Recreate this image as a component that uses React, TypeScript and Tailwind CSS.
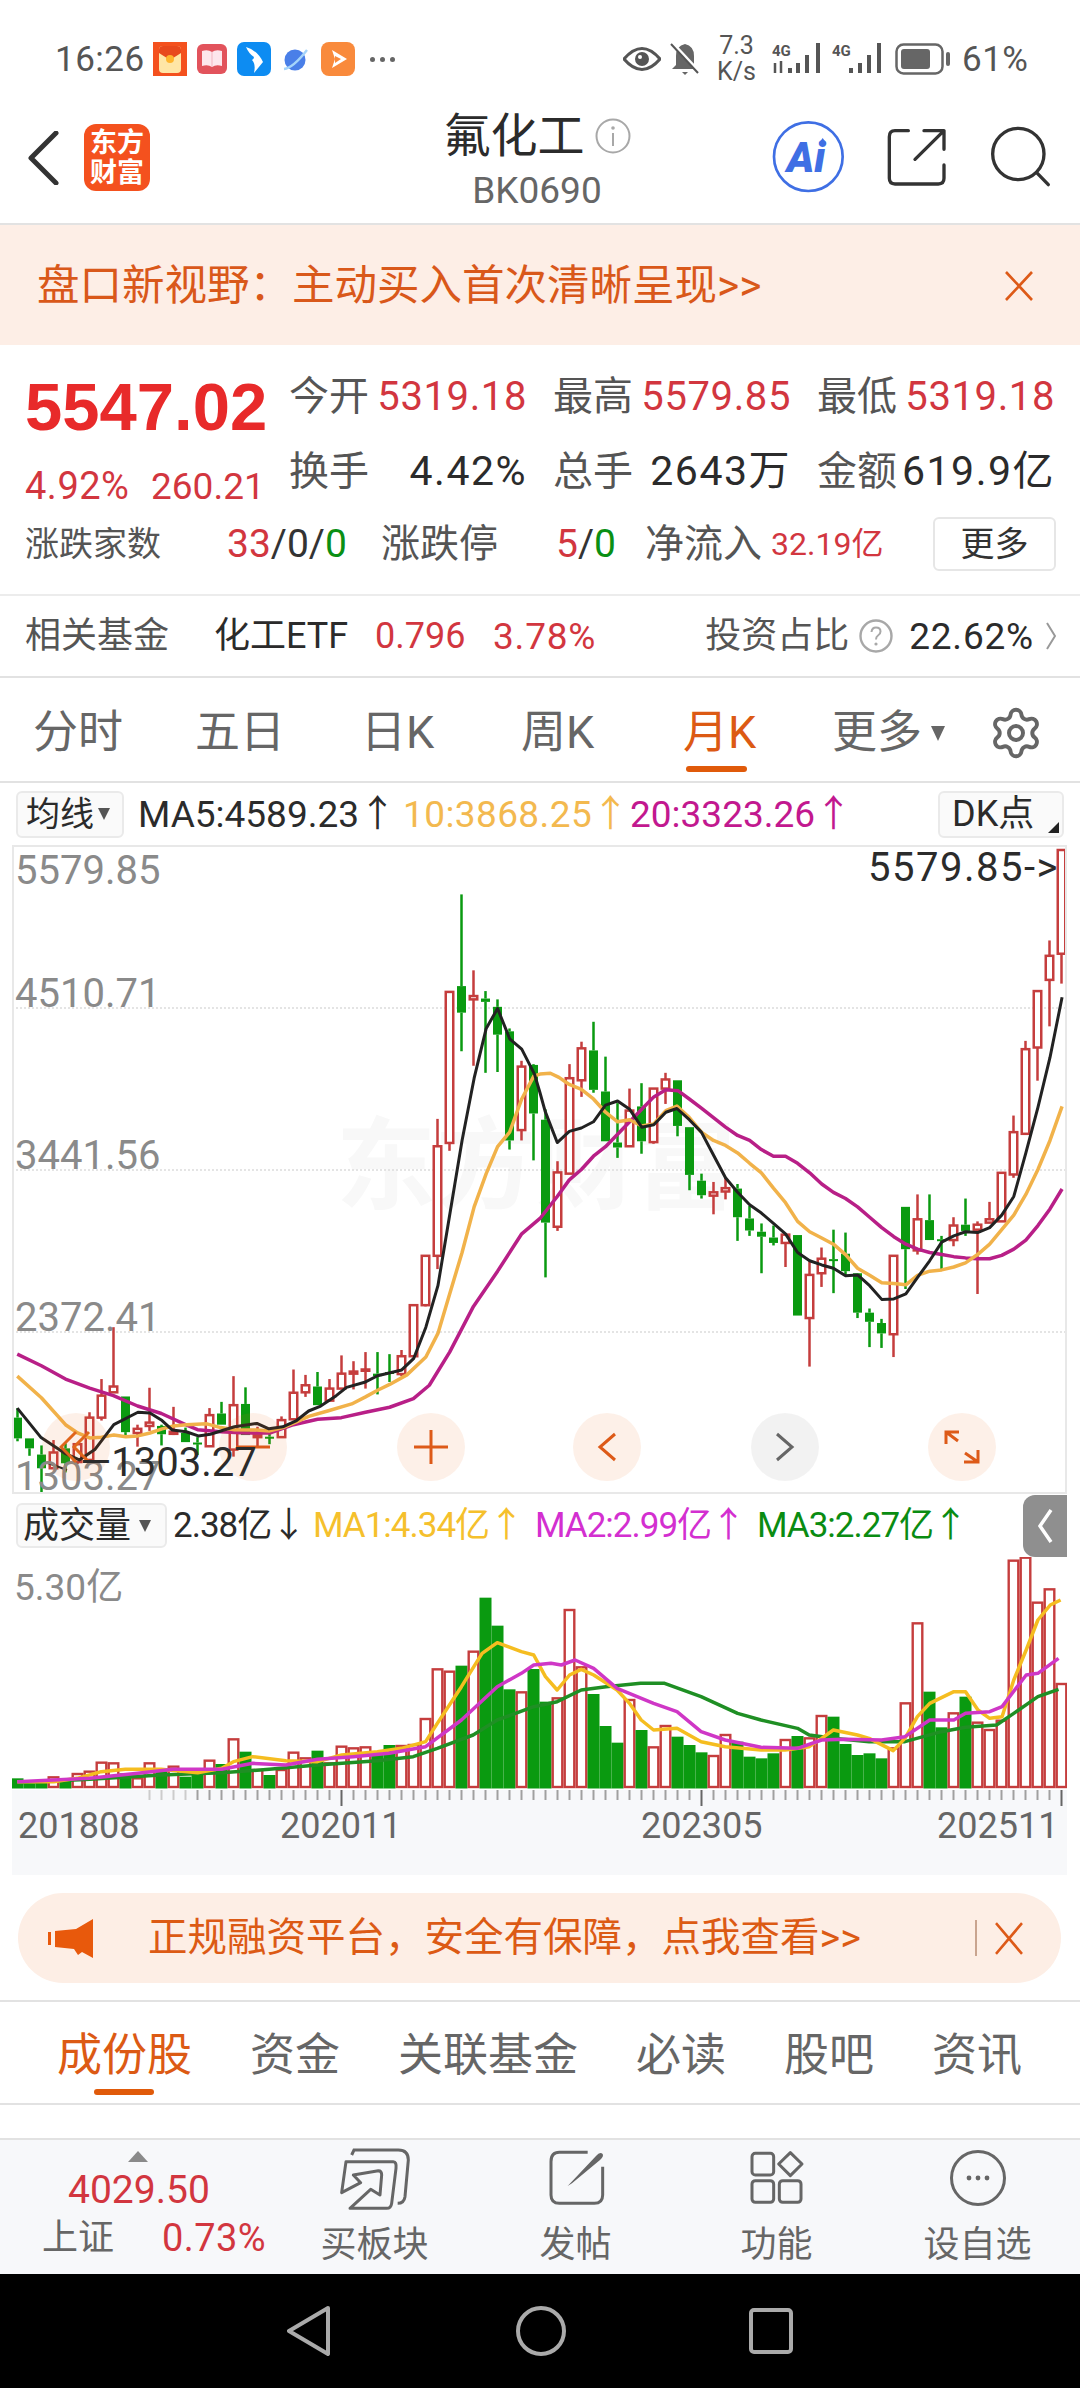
import React from 'react';
import { Settings } from 'lucide-react';

const RED = '#c53d3d';
const GREEN = '#0a9a10';

// candles read off the chart: [wick top, body top, body bottom, wick bottom, colour]
type Candle = [number, number, number, number, 'r' | 'g'];
const candles: Candle[] = [
  [1345, 1368, 1418, 1425, 'g'], [1418, 1418, 1442, 1460, 'g'], [1435, 1457, 1490, 1552, 'g'], [1422, 1452, 1490, 1490, 'r'],
  [1430, 1442, 1478, 1500, 'g'], [1432, 1432, 1475, 1480, 'r'], [1355, 1368, 1470, 1475, 'r'], [1275, 1315, 1368, 1375, 'r'],
  [1150, 1293, 1307, 1307, 'r'], [1317, 1317, 1403, 1410, 'g'], [1385, 1395, 1405, 1438, 'r'], [1296, 1380, 1388, 1400, 'r'],
  [1385, 1388, 1408, 1435, 'g'], [1342, 1402, 1407, 1410, 'r'], [1392, 1405, 1427, 1427, 'g'], [1415, 1428, 1432, 1458, 'g'],
  [1345, 1362, 1437, 1437, 'r'], [1330, 1358, 1385, 1385, 'g'], [1268, 1338, 1445, 1462, 'r'], [1295, 1335, 1410, 1410, 'g'],
  [1390, 1410, 1415, 1440, 'r'], [1405, 1414, 1417, 1432, 'g'], [1365, 1374, 1415, 1415, 'r'], [1252, 1308, 1372, 1372, 'r'],
  [1265, 1290, 1307, 1318, 'r'], [1258, 1293, 1338, 1338, 'g'], [1275, 1298, 1327, 1327, 'r'], [1218, 1262, 1298, 1298, 'r'],
  [1232, 1257, 1262, 1300, 'r'], [1210, 1252, 1255, 1298, 'r'], [1210, 1262, 1268, 1312, 'g'], [1215, 1258, 1262, 1282, 'g'],
  [1205, 1220, 1263, 1268, 'r'], [1097, 1097, 1220, 1220, 'r'], [978, 978, 1097, 1100, 'r'], [648, 714, 978, 1010, 'r'],
  [342, 342, 706, 725, 'r'], [107, 328, 392, 485, 'g'], [290, 352, 360, 520, 'r'], [340, 358, 366, 537, 'g'],
  [360, 378, 445, 535, 'g'], [430, 437, 700, 722, 'g'], [508, 522, 675, 700, 'r'], [516, 518, 635, 748, 'g'],
  [625, 650, 898, 1030, 'g'], [750, 777, 908, 918, 'r'], [516, 550, 780, 780, 'r'], [462, 478, 555, 595, 'r'],
  [414, 483, 578, 585, 'g'], [498, 582, 702, 702, 'g'], [610, 705, 717, 742, 'g'], [575, 628, 714, 714, 'r'],
  [562, 618, 702, 732, 'g'], [575, 575, 704, 708, 'r'], [537, 553, 575, 612, 'r'], [555, 555, 665, 690, 'g'],
  [668, 668, 783, 820, 'g'], [780, 797, 832, 840, 'g'], [800, 825, 833, 878, 'r'], [790, 815, 823, 842, 'r'],
  [805, 816, 885, 942, 'g'], [858, 888, 917, 930, 'g'], [900, 920, 932, 1020, 'g'], [905, 934, 947, 953, 'g'],
  [927, 927, 947, 1005, 'r'], [928, 928, 1122, 1122, 'g'], [990, 1024, 1128, 1245, 'r'], [958, 985, 1020, 1053, 'r'],
  [915, 986, 989, 1068, 'g'], [922, 973, 1015, 1025, 'g'], [1020, 1020, 1115, 1128, 'g'], [1105, 1115, 1137, 1198, 'g'],
  [1130, 1140, 1165, 1200, 'g'], [978, 978, 1167, 1222, 'r'], [860, 860, 962, 1058, 'g'], [830, 890, 965, 975, 'r'],
  [830, 892, 940, 940, 'g'], [930, 938, 942, 1010, 'g'], [885, 905, 940, 955, 'r'], [840, 903, 918, 930, 'g'],
  [895, 903, 915, 1070, 'r'], [848, 890, 898, 898, 'r'], [778, 778, 895, 895, 'r'], [640, 680, 782, 790, 'r'],
  [460, 480, 684, 684, 'r'], [340, 340, 476, 556, 'r'], [218, 255, 313, 425, 'r'], [0, 0, 250, 322, 'r'],
];

const leftX = (z: number) => z / 2.9;
const rightX = (z: number) => 540 + z / 2.9;
const kY = (z: number) => 850 + z / 2.41;
const candleX = (i: number) => 17.5 + 12 * i;

const kLine = (left: number[][], right: number[][]) =>
  [...left.map(([x, y]) => `${leftX(x)},${kY(y)}`), ...right.map(([x, y]) => `${rightX(x)},${kY(y)}`)].join(' ');

const ma5 = kLine(
  [[50, 1345], [118, 1415], [190, 1455], [230, 1470], [275, 1445], [330, 1385], [400, 1355], [435, 1357], [470, 1375], [500, 1398], [540, 1402], [575, 1412], [610, 1408], [680, 1390], [745, 1382], [780, 1395], [820, 1390], [860, 1375], [895, 1352], [930, 1340], [975, 1315], [1005, 1295], [1060, 1282], [1095, 1267], [1165, 1253], [1200, 1225], [1235, 1150], [1270, 1050], [1300, 900], [1340, 700], [1375, 550], [1410, 430], [1443, 382], [1478, 455], [1513, 480], [1550, 540]],
  [[0, 585], [15, 630], [50, 705], [85, 678], [120, 670], [155, 655], [190, 615], [225, 605], [260, 625], [295, 668], [330, 662], [365, 632], [397, 623], [433, 650], [468, 680], [503, 735], [538, 790], [573, 825], [608, 855], [642, 875], [677, 900], [712, 925], [747, 970], [782, 990], [817, 1000], [851, 1008], [886, 1026], [921, 1024], [956, 1050], [991, 1083], [1026, 1082], [1061, 1070], [1095, 1030], [1130, 990], [1165, 945], [1200, 930], [1234, 920], [1269, 922], [1304, 910], [1339, 880], [1374, 835], [1409, 730], [1444, 620], [1479, 500], [1514, 355]],
);
const ma10 = kLine(
  [[50, 1268], [120, 1320], [190, 1385], [225, 1405], [260, 1417], [295, 1415], [330, 1410], [365, 1414], [400, 1412], [435, 1405], [470, 1395], [503, 1388], [540, 1385], [600, 1383], [640, 1392], [680, 1397], [745, 1398], [782, 1400], [820, 1392], [860, 1378], [895, 1365], [950, 1352], [1020, 1335], [1060, 1318], [1095, 1302], [1130, 1288], [1180, 1265], [1235, 1222], [1270, 1165], [1304, 1070], [1340, 970], [1375, 860], [1410, 780], [1443, 715], [1478, 680], [1513, 600], [1548, 545]],
  [[0, 540], [30, 538], [55, 548], [85, 565], [120, 577], [155, 600], [190, 632], [225, 655], [260, 650], [295, 665], [330, 660], [365, 628], [397, 617], [433, 645], [468, 680], [503, 700], [538, 712], [573, 730], [608, 755], [642, 778], [677, 815], [712, 850], [747, 895], [782, 920], [817, 935], [851, 950], [886, 975], [921, 1008], [956, 1025], [991, 1043], [1026, 1045], [1061, 1048], [1095, 1025], [1130, 1015], [1165, 1012], [1200, 1005], [1234, 995], [1269, 975], [1304, 950], [1339, 915], [1374, 880], [1409, 830], [1444, 770], [1479, 700], [1514, 618]],
);
const ma20 = kLine(
  [[50, 1215], [120, 1243], [190, 1275], [260, 1297], [329, 1315], [399, 1340], [468, 1358], [538, 1385], [573, 1397], [640, 1402], [712, 1405], [782, 1405], [851, 1385], [921, 1372], [990, 1368], [1060, 1355], [1130, 1343], [1199, 1322], [1245, 1290], [1304, 1210], [1373, 1100], [1443, 1015], [1513, 925]],
  [[0, 888], [50, 835], [85, 795], [120, 770], [155, 738], [190, 715], [225, 685], [260, 655], [295, 625], [330, 595], [365, 578], [400, 580], [433, 600], [468, 622], [503, 645], [538, 668], [573, 688], [608, 700], [642, 722], [677, 738], [712, 738], [747, 755], [782, 778], [817, 805], [851, 825], [886, 840], [921, 860], [956, 885], [991, 910], [1026, 932], [1061, 950], [1095, 962], [1130, 970], [1165, 975], [1200, 980], [1234, 983], [1269, 985], [1304, 985], [1339, 977], [1374, 962], [1409, 940], [1444, 905], [1479, 865], [1514, 817]],
);

// volume bars: top of bar, colour
const vols: [number, 'r' | 'g'][] = [
  [865, 'g'], [880, 'g'], [870, 'g'], [862, 'r'], [870, 'g'], [852, 'r'], [845, 'r'], [818, 'r'], [820, 'r'], [850, 'g'], [865, 'r'],
  [820, 'r'], [835, 'g'], [830, 'r'], [860, 'g'], [850, 'g'], [812, 'r'], [822, 'g'], [748, 'r'], [785, 'g'], [840, 'r'], [855, 'g'],
  [840, 'r'], [788, 'r'], [805, 'r'], [782, 'g'], [820, 'r'], [770, 'r'], [775, 'r'], [772, 'r'], [795, 'g'], [765, 'g'], [768, 'r'],
  [765, 'r'], [687, 'r'], [538, 'r'], [545, 'r'], [527, 'g'], [485, 'r'], [323, 'g'], [407, 'g'], [598, 'g'], [607, 'r'], [537, 'g'],
  [635, 'g'], [625, 'r'], [360, 'r'], [532, 'r'], [612, 'g'], [708, 'g'], [758, 'g'], [630, 'r'], [720, 'g'], [772, 'r'], [708, 'r'],
  [740, 'g'], [765, 'g'], [787, 'g'], [798, 'r'], [735, 'r'], [755, 'g'], [800, 'g'], [805, 'g'], [790, 'g'], [750, 'r'], [738, 'g'],
  [745, 'r'], [678, 'r'], [680, 'g'], [762, 'g'], [795, 'g'], [790, 'g'], [805, 'g'], [775, 'r'], [640, 'r'], [400, 'r'], [605, 'g'],
  [712, 'g'], [670, 'r'], [620, 'g'], [698, 'r'], [720, 'r'], [692, 'r'], [212, 'r'], [203, 'r'], [338, 'r'], [298, 'r'], [582, 'r'],
];

const volLine = (pts: number[][]) => pts.map(([x, y]) => `${x / 1.452},${1490 + y / 3}`).join(' ');
const volMa1 = volLine([[25, 875], [78, 875], [112, 865], [147, 845], [182, 838], [234, 838], [287, 848], [322, 835], [339, 815], [367, 800], [415, 812], [461, 815], [496, 795], [548, 785], [583, 775], [618, 755], [635, 700], [670, 590], [700, 490], [722, 458], [757, 485], [775, 495], [792, 560], [809, 600], [827, 555], [844, 538], [862, 555], [896, 600], [914, 640], [931, 690], [949, 720], [983, 715], [1018, 755], [1053, 770], [1105, 780], [1140, 780], [1175, 770], [1193, 745], [1210, 720], [1245, 735], [1262, 745], [1297, 782], [1314, 745], [1332, 680], [1350, 640], [1385, 605], [1402, 605], [1420, 660], [1437, 685], [1455, 680], [1472, 570], [1490, 480], [1507, 390], [1525, 345], [1540, 330]]);
const volMa2 = volLine([[25, 875], [130, 865], [200, 850], [252, 838], [322, 838], [367, 820], [415, 825], [461, 808], [513, 800], [565, 790], [618, 770], [670, 690], [722, 590], [757, 550], [775, 525], [800, 520], [815, 525], [835, 510], [862, 535], [896, 595], [949, 640], [983, 665], [1018, 725], [1053, 750], [1105, 772], [1158, 775], [1193, 750], [1227, 748], [1280, 750], [1314, 740], [1350, 690], [1385, 690], [1402, 670], [1437, 665], [1455, 650], [1490, 555], [1507, 550], [1537, 505]]);
const volMa3 = volLine([[25, 878], [130, 868], [234, 855], [322, 848], [391, 838], [461, 825], [548, 812], [600, 800], [635, 775], [687, 735], [722, 690], [775, 650], [809, 635], [844, 600], [880, 590], [930, 580], [965, 580], [1018, 620], [1071, 670], [1105, 690], [1158, 715], [1175, 735], [1210, 745], [1262, 755], [1314, 755], [1367, 725], [1402, 712], [1447, 705], [1472, 670], [1507, 620], [1537, 598]]);

const ticks = Array.from({ length: 77 }, (_, k) => k + 11);

const KChart = () => (
  <svg className="block" width={1051} height={645} viewBox="14 847 1051 645">
    {[1008, 1170, 1332].map((y) => (
      <line key={y} x1={16} x2={1065} y1={y} y2={y} stroke="#dcdcdc" strokeWidth={1.5} strokeDasharray="2 2" />
    ))}
    {candles.map(([wt, bt, bb, wb, c], i) => {
      const x = candleX(i);
      const col = c === 'r' ? RED : GREEN;
      return (
        <g key={i}>
          <line x1={x} x2={x} y1={kY(wt)} y2={kY(bt)} stroke={col} strokeWidth={2.5} />
          <line x1={x} x2={x} y1={kY(bb)} y2={kY(wb)} stroke={col} strokeWidth={2.5} />
          {c === 'r' ? (
            <rect x={x - 3.75} y={kY(bt)} width={7.5} height={Math.max(kY(bb) - kY(bt), 1)} fill="#fff" stroke={col} strokeWidth={2.5} />
          ) : (
            <rect x={x - 4.5} y={kY(bt)} width={9} height={Math.max(kY(bb) - kY(bt), 2)} fill={col} />
          )}
        </g>
      );
    })}
    <polyline points={ma20} fill="none" stroke="#b81f87" strokeWidth={3.5} strokeLinejoin="round" />
    <polyline points={ma10} fill="none" stroke="#f1b24a" strokeWidth={3.5} strokeLinejoin="round" />
    <polyline points={ma5} fill="none" stroke="#222" strokeWidth={3} strokeLinejoin="round" />
    <line x1={48} y1={1463} x2={67} y2={1470} stroke="#222" strokeWidth={2} />
  </svg>
);

const VolChart = () => (
  <svg className="block" width={1055} height={233} viewBox="12 1557 1055 233">
    {vols.map(([top, c], i) => {
      const x = candleX(i);
      const y = 1490 + top / 3;
      return c === 'r' ? (
        <rect key={i} x={x - 4.8} y={y} width={9.6} height={1787 - y} fill="#fff" stroke={RED} strokeWidth={2.4} />
      ) : (
        <rect key={i} x={x - 6} y={y} width={12} height={1788.5 - y} fill={GREEN} />
      );
    })}
    <polyline points={volMa3} fill="none" stroke="#1f8f24" strokeWidth={3.5} strokeLinejoin="round" />
    <polyline points={volMa1} fill="none" stroke="#f5bd20" strokeWidth={3.5} strokeLinejoin="round" />
    <polyline points={volMa2} fill="none" stroke="#cf37c6" strokeWidth={3.5} strokeLinejoin="round" />
  </svg>
);

const CloseX = ({ w = 30, h = 30 }: { w?: number; h?: number }) => (
  <svg width={w} height={h} viewBox="0 0 30 30" preserveAspectRatio="none">
    <path d="M2 1 L28 29 M28 1 L2 29" stroke="#dd5a18" strokeWidth={2.6} fill="none" />
  </svg>
);

const OverlayCircle = ({ left, gray, children }: { left: string; gray?: boolean; children: React.ReactNode }) => (
  <div className={`absolute top-[566px] h-[68px] w-[68px] rounded-full flex items-center justify-center ${left} ${gray ? 'bg-black/5' : 'bg-[#f06a1a]/10'}`}>
    {children}
  </div>
);

const StatusBar = () => (
  <div className="h-[90px] flex items-center pt-[28px] pl-[55px] pr-[48px] text-[#555]">
    <span className="w-[98px] text-[35px] leading-none tracking-[0.5px]">16:26</span>
    <svg width={34} height={34} viewBox="0 0 34 34">
      <rect width={34} height={34} fill="#f4511e" />
      <rect x={6} y={4} width={22} height={27} rx={4} fill="#ffe6a6" />
      <path d="M6 8 Q6 4 10 4 H24 Q28 4 28 8 V11 L17 18 L6 11 Z" fill="#e8491d" />
      <circle cx={17} cy={17} r={4} fill="#ffb52e" />
    </svg>
    <svg className="ml-[10px]" width={30} height={30} viewBox="0 0 30 30">
      <rect width={30} height={30} rx={6} fill="#e2535c" />
      <path d="M5 7 Q11 5 15 8 Q19 5 25 7 V22 Q19 20 15 23 Q11 20 5 22 Z" fill="#fde6ec" />
      <path d="M15 8 V23" stroke="#f3b5c0" strokeWidth={1} />
    </svg>
    <svg className="ml-[10px]" width={34} height={34} viewBox="0 0 34 34">
      <rect width={34} height={34} rx={7} fill="#0d8cf2" />
      <path d="M9 5 Q20 8 26 20 L17 31 Q19 22 15 18 Q17 17 17 15 Q12 12 9 5 Z" fill="#fff" />
    </svg>
    <svg className="ml-[12px]" width={25} height={25} viewBox="0 0 25 25">
      <circle cx={12} cy={13} r={10.5} fill="#4a7fe8" />
      <path d="M1 22 Q10 21 24 3" stroke="#a5d4fa" strokeWidth={2.4} fill="none" />
    </svg>
    <svg className="ml-[13px]" width={34} height={34} viewBox="0 0 34 34">
      <rect width={34} height={34} rx={8} fill="#f98a3c" />
      <path d="M11 8 L26 17 L11 26 L14 17 Z" fill="#fff" />
      <path d="M14 14 L20 17 L14 21 Z" fill="#f98a3c" />
    </svg>
    <span className="ml-[15px] flex gap-[5px]">
      <i className="h-[5px] w-[5px] rounded-full bg-[#666]" />
      <i className="h-[5px] w-[5px] rounded-full bg-[#666]" />
      <i className="h-[5px] w-[5px] rounded-full bg-[#666]" />
    </span>
    <div className="ml-auto flex items-center">
      <svg width={38} height={24} viewBox="0 0 38 24">
        <path d="M1 12 Q10 1.5 19 1.5 Q28 1.5 37 12 Q28 22.5 19 22.5 Q10 22.5 1 12 Z" fill="none" stroke="#555" strokeWidth={3} />
        <circle cx={19} cy={12} r={7} fill="#555" />
        <circle cx={17} cy={10} r={2} fill="#fff" />
      </svg>
      <svg className="ml-[9px]" width={30} height={36} viewBox="0 0 30 36">
        <path d="M15 3 Q24 5 24 15 V24 L28 28 H2 L6 24 V15 Q6 5 15 3 Z" fill="#666" />
        <path d="M12 31 H18 L15 34 Z" fill="#666" />
        <path d="M2 2 L29 31" stroke="#fff" strokeWidth={4} />
        <path d="M1 3 L28 32" stroke="#555" strokeWidth={2} />
      </svg>
      <div className="ml-[18px] w-[37px] flex flex-col items-center text-[25px] leading-[26px] text-[#555]">
        <span>7.3</span>
        <span>K/s</span>
      </div>
      <svg className="ml-[17px]" width={50} height={32} viewBox="0 0 50 32">
        <text x={0} y={13} fontSize={15} fontWeight={700} fill="#555" fontFamily="Roboto">4G</text>
        <path d="M3 20 V30 M9 18 V30" stroke="#555" strokeWidth={2.5} />
        <rect x={16} y={25} width={4} height={5} fill="#555" />
        <rect x={24} y={20} width={4} height={10} fill="#555" />
        <rect x={33} y={12} width={4} height={18} fill="#555" />
        <rect x={44} y={0} width={4} height={30} fill="#555" />
      </svg>
      <svg className="ml-[10px]" width={51} height={32} viewBox="0 0 51 32">
        <text x={0} y={13} fontSize={15} fontWeight={700} fill="#555" fontFamily="Roboto">4G</text>
        <rect x={17} y={25} width={4} height={5} fill="#555" />
        <rect x={26} y={20} width={4} height={10} fill="#555" />
        <rect x={35} y={12} width={4} height={18} fill="#555" />
        <rect x={45} y={0} width={4} height={30} fill="#555" />
      </svg>
      <svg className="ml-[12px]" width={55} height={32} viewBox="0 0 55 32">
        <rect x={1.5} y={1.5} width={46} height={29} rx={7} fill="none" stroke="#666" strokeWidth={2.5} />
        <rect x={6} y={6} width={29} height={20} rx={3} fill="#666" />
        <rect x={51} y={9} width={4} height={14} rx={2} fill="#666" />
      </svg>
      <span className="ml-[12px] w-[70px] text-[35px] leading-none tracking-[0.5px]">61%</span>
    </div>
  </div>
);

const NavHeader = () => (
  <div className="h-[135px] border-b-2 border-[#e2e2e2] flex items-start">
    <svg className="ml-[27px] mt-[41px]" width={32} height={54} viewBox="0 0 32 54">
      <path d="M29 2 L4 27 L29 52" fill="none" stroke="#333" strokeWidth={5} strokeLinecap="round" strokeLinejoin="round" />
    </svg>
    <div className="ml-[25px] mt-[34px] h-[67px] w-[66px] rounded-[12px] bg-[#f4511e] flex flex-col items-center justify-center text-white text-[27px] leading-[30px] font-bold">
      <span>东方</span>
      <span>财富</span>
    </div>
    <div className="ml-[287px] w-[200px] flex flex-col items-center pt-[23px]">
      <div className="flex items-center">
        <span className="text-[47px] leading-[46px] text-[#2b2b2b]">氟化工</span>
        <svg className="ml-[10px]" width={36} height={36} viewBox="0 0 36 36">
          <circle cx={18} cy={18} r={16.5} fill="none" stroke="#a8a8a8" strokeWidth={2} />
          <circle cx={18} cy={10} r={1.8} fill="#a8a8a8" />
          <path d="M18 15 V28" stroke="#a8a8a8" strokeWidth={2} />
        </svg>
      </div>
      <span className="mt-[13px] text-[37px] leading-none text-[#666]">BK0690</span>
    </div>
    <div className="ml-auto mr-[10px] mt-[20px] flex">
      <svg width={100} height={90} viewBox="0 0 300 270">
        <circle cx={115} cy={140} r={103} fill="none" stroke="#3f6fe4" strokeWidth={8} />
        <text x={50} y={185} fontSize={125} fontWeight={900} fontStyle="italic" fill="#3f6fe4" fontFamily="Roboto">Ai</text>
        <path d="M158 84 L168 98 L158 112 L148 98 Z" fill="#3f6fe4" />
      </svg>
      <svg width={100} height={90} viewBox="300 0 300 270">
        <path d="M415 62 H375 Q358 62 358 80 V205 Q358 222 375 222 H505 Q522 222 522 205 V165 M462 62 H522 V118 M522 62 L435 148" fill="none" stroke="#333" strokeWidth={10} strokeLinecap="round" strokeLinejoin="round" />
      </svg>
      <svg width={100} height={90} viewBox="600 0 300 270">
        <circle cx={745} cy={132} r={77} fill="none" stroke="#333" strokeWidth={10} />
        <path d="M800 188 L835 224" stroke="#333" strokeWidth={10} strokeLinecap="round" />
      </svg>
    </div>
  </div>
);

const StatCell = ({ label, value, red }: { label: string; value: string; red?: boolean }) => (
  <div className="flex items-center justify-between h-[75px]">
    <span className="text-[40px] leading-none text-[#555]">{label}</span>
    {red ? (
      <span className="text-[40px] leading-none tracking-[0.6px] text-[#d2363f]">{value}</span>
    ) : (
      <span className="text-[41px] leading-none tracking-[1.5px] text-[#2b2b2b]">{value}</span>
    )}
  </div>
);

export default function App() {
  return (
    <div className="w-[1080px] h-[2388px] overflow-hidden bg-white font-['Roboto','Noto_Sans_CJK_SC',sans-serif]">
      <StatusBar />
      <NavHeader />

      {/* top banner */}
      <div className="h-[120px] bg-[#fdeee6] flex items-center pt-[2px] pl-[37px] pr-[46px] justify-between">
        <span className="text-[42.5px] leading-none text-[#d9581a]">盘口新视野：主动买入首次清晰呈现&gt;&gt;</span>
        <CloseX />
      </div>

      {/* quote block */}
      <div className="h-[251px] border-b-2 border-[#ececec]">
        <div className="flex h-[164px]">
          <div className="w-[289px] pl-[25px] pt-[34px]">
            <div className="text-[67px] leading-[56px] font-bold text-[#e82a2a] font-['Liberation_Sans',sans-serif]">5547.02</div>
            <div className="mt-[32px] flex items-center leading-none text-[#d2363f]">
              <span className="text-[38px] w-[126px] tracking-[0.5px]">4.92%</span>
              <span className="text-[37px]">260.21</span>
            </div>
          </div>
          <div className="w-[766px] grid grid-cols-3 gap-x-[26px] content-start pt-[14px]">
            <StatCell label="今开" value="5319.18" red />
            <StatCell label="最高" value="5579.85" red />
            <StatCell label="最低" value="5319.18" red />
            <StatCell label="换手" value="4.42%" />
            <StatCell label="总手" value="2643万" />
            <StatCell label="金额" value="619.9亿" />
          </div>
        </div>
        <div className="flex items-center h-[54px] mt-[8px] pl-[25px]">
          <span className="w-[202px] text-[34px] leading-none text-[#555]">涨跌家数</span>
          <span className="w-[154px] text-[39px] leading-none text-[#333]">
            <span className="text-[#d2363f]">33</span>/0/<span className="text-[#0a8f14]">0</span>
          </span>
          <span className="w-[175px] text-[39px] leading-none text-[#555]">涨跌停</span>
          <span className="w-[89px] text-[39px] leading-none text-[#333]">
            <span className="text-[#d2363f]">5</span>/<span className="text-[#0a8f14]">0</span>
          </span>
          <span className="w-[126px] text-[39px] leading-none text-[#555]">净流入</span>
          <span className="w-[162px] text-[32px] leading-none text-[#d2363f]">32.19亿</span>
          <span className="w-[123px] h-[54px] border-2 border-[#e6e6e6] rounded-[6px] flex items-center justify-center text-[34px] leading-none text-[#333]">更多</span>
        </div>
      </div>

      {/* related fund */}
      <div className="h-[82px] border-b-2 border-[#e2e2e2] flex items-center pl-[25px] pr-[24px]">
        <span className="w-[189px] text-[36px] leading-none text-[#555]">相关基金</span>
        <span className="w-[161px] text-[36px] leading-none text-[#2b2b2b]">化工ETF</span>
        <span className="w-[118px] text-[36px] leading-none text-[#d2363f]">0.796</span>
        <span className="text-[37px] leading-none tracking-[0.8px] text-[#d2363f]">3.78%</span>
        <span className="ml-auto text-[36px] leading-none text-[#555]">投资占比</span>
        <svg className="ml-[10px]" width={34} height={34} viewBox="0 0 34 34">
          <circle cx={17} cy={17} r={15.5} fill="none" stroke="#a8a8a8" strokeWidth={2.4} />
          <path d="M12.5 13 Q13 8.5 17 8.5 Q21.5 8.5 21.5 12.5 Q21.5 15 19 16.5 Q17 17.7 17 20.5" fill="none" stroke="#a8a8a8" strokeWidth={2} />
          <circle cx={17} cy={25} r={1.6} fill="#a8a8a8" />
        </svg>
        <span className="ml-[16px] text-[37px] leading-none tracking-[0.8px] text-[#2b2b2b]">22.62%</span>
        <svg className="ml-[12px]" width={10} height={28} viewBox="0 0 10 28">
          <path d="M1 1 L9 14 L1 27" fill="none" stroke="#999" strokeWidth={2} />
        </svg>
      </div>

      {/* period tabs */}
      <div className="relative h-[105px] border-b-2 border-[#e2e2e2] flex items-center pt-[6px] pl-[33px] text-[45px] leading-none text-[#666]">
        <span className="w-[162px]">分时</span>
        <span className="w-[166px]">五日</span>
        <span className="w-[160px]">日K</span>
        <span className="w-[162px]">周K</span>
        <span className="w-[149px] relative text-[#dc5a14]">
          月K
          <i className="absolute left-[3px] top-[56px] h-[6px] w-[61px] rounded-full bg-[#e05a0a]" />
        </span>
        <span className="w-[158px] flex items-center">
          更多
          <svg className="ml-[9px]" width={14} height={18} viewBox="0 0 14 18">
            <path d="M0 2 H14 L7 17 Z" fill="#666" />
          </svg>
        </span>
        <Settings size={56} strokeWidth={1.7} color="#666" className="-ml-[2px]" />
      </div>

      {/* MA legend */}
      <div className="h-[62px] flex items-center pl-[16px] pr-[16px] text-[37px] leading-none">
        <div className="w-[108px] h-[47px] border-2 border-[#eaeaea] rounded-[6px] bg-[#fafafa] flex items-center pl-[8px] text-[#2b2b2b] text-[34px]">
          均线
          <svg className="ml-[4px]" width={12} height={14} viewBox="0 0 12 14">
            <path d="M0 1 H12 L6 13 Z" fill="#555" />
          </svg>
        </div>
        <span className="ml-[14px] w-[265px] text-[#2b2b2b] whitespace-nowrap">MA5:4589.23↑</span>
        <span className="w-[227px] tracking-[0.4px] text-[#f3b94f] whitespace-nowrap">10:3868.25↑</span>
        <span className="text-[#c2188f] whitespace-nowrap">20:3323.26↑</span>
        <div className="relative ml-auto w-[126px] h-[47px] border-2 border-[#eaeaea] rounded-[6px] bg-[#fafafa] flex items-center pl-[12px] text-[#2b2b2b] text-[36px]">
          DK点
          <svg className="absolute right-[3px] bottom-[3px]" width={11} height={11} viewBox="0 0 11 11">
            <path d="M11 0 V11 H0 Z" fill="#222" />
          </svg>
        </div>
      </div>

      {/* K line chart */}
      <div className="relative mx-[12px] h-[649px] w-[1055px] border-2 border-[#e8e8e8] overflow-hidden">
        <div className="absolute left-[322px] top-[270px] text-[100px] leading-none font-bold text-[#f8f8f8] whitespace-nowrap">东方财富</div>
        <div className="absolute inset-0">
          <KChart />
        </div>
        <span className="absolute left-[1px] top-[4px] text-[40px] leading-[40px] text-[#8a8a8a]">5579.85</span>
        <span className="absolute left-[1px] top-[127px] text-[40px] leading-[40px] text-[#8a8a8a]">4510.71</span>
        <span className="absolute left-[1px] top-[289px] text-[40px] leading-[40px] text-[#8a8a8a]">3441.56</span>
        <span className="absolute left-[1px] top-[451px] text-[40px] leading-[40px] text-[#8a8a8a]">2372.41</span>
        <span className="absolute left-[1px] top-[610px] text-[40px] leading-[40px] text-[#8a8a8a]">1303.27</span>
        <span className="absolute right-[6px] top-[1px] text-[40px] leading-[40px] tracking-[1.5px] text-[#2b2b2b]">5579.85-&gt;</span>
        <OverlayCircle left="left-[28px]">
          <svg width={34} height={34} viewBox="0 0 34 34">
            <path d="M17 2 L2 17 L17 32 M30 2 L15 17 L30 32" fill="none" stroke="#e0651c" strokeWidth={3} />
          </svg>
        </OverlayCircle>
        <OverlayCircle left="left-[205px]">
          <svg width={34} height={4} viewBox="0 0 34 4">
            <path d="M0 2 H34" stroke="#dd5a18" strokeWidth={3} />
          </svg>
        </OverlayCircle>
        <OverlayCircle left="left-[383px]">
          <svg width={34} height={34} viewBox="0 0 34 34">
            <path d="M0 17 H34 M17 0 V34" stroke="#dd5a18" strokeWidth={3} />
          </svg>
        </OverlayCircle>
        <OverlayCircle left="left-[559px]">
          <svg width={20} height={30} viewBox="0 0 20 30">
            <path d="M18 2 L3 15 L18 28" fill="none" stroke="#dd5a18" strokeWidth={3} />
          </svg>
        </OverlayCircle>
        <OverlayCircle left="left-[737px]" gray>
          <svg width={20} height={30} viewBox="0 0 20 30">
            <path d="M2 2 L17 15 L2 28" fill="none" stroke="#666" strokeWidth={3} />
          </svg>
        </OverlayCircle>
        <OverlayCircle left="left-[914px]">
          <svg width={36} height={34} viewBox="0 0 36 34">
            <path d="M2 14 V2 H15 M2 2 L14 11 M34 20 V32 H20 M34 32 L21 23" fill="none" stroke="#dd5a18" strokeWidth={3} />
          </svg>
        </OverlayCircle>
        <span className="absolute left-[66px] top-[596px] text-[40px] leading-[40px] text-[#2b2b2b] whitespace-nowrap">—1303.27</span>
      </div>

      {/* volume legend */}
      <div className="h-[63px] flex items-center pl-[16px] pr-[13px] text-[35px] leading-none tracking-[-1px]">
        <div className="w-[151px] h-[45px] border-2 border-[#eaeaea] rounded-[6px] bg-[#fafafa] flex items-center pl-[5px] tracking-normal text-[#2b2b2b] text-[36px]">
          成交量
          <svg className="ml-[8px]" width={12} height={14} viewBox="0 0 12 14">
            <path d="M0 1 H12 L6 13 Z" fill="#555" />
          </svg>
        </div>
        <span className="ml-[6px] w-[140px] text-[#2b2b2b] whitespace-nowrap">2.38亿↓</span>
        <span className="w-[222px] text-[#f5c02c] whitespace-nowrap">MA1:4.34亿↑</span>
        <span className="w-[222px] text-[#d32fd0] whitespace-nowrap">MA2:2.99亿↑</span>
        <span className="text-[#0a8c12] whitespace-nowrap">MA3:2.27亿↑</span>
        <div className="ml-auto w-[44px] h-[62px] rounded-l-[12px] bg-[#8f8f8f] flex items-center justify-center">
          <svg width={16} height={36} viewBox="0 0 16 36">
            <path d="M14 2 L3 18 L14 34" fill="none" stroke="#fff" strokeWidth={3.5} />
          </svg>
        </div>
      </div>

      {/* volume chart */}
      <div className="relative mx-[12px] w-[1055px] h-[233px] overflow-hidden">
        <VolChart />
        <span className="absolute left-[2px] top-[12px] text-[37px] leading-[37px] text-[#8a8a8a]">5.30亿</span>
      </div>

      {/* date axis */}
      <div className="mx-[12px] w-[1055px] h-[85px] bg-[#f7f8fa]">
        <svg className="block" width={1055} height={17} viewBox="12 1790 1055 17">
          {ticks.map((i) => {
            const long = i === 27 || i === 57 || i === 87;
            return (
              <line
                key={i}
                x1={candleX(i)}
                x2={candleX(i)}
                y1={1790}
                y2={long ? 1806 : 1800}
                stroke={long ? '#666' : i < 15 ? '#ccc' : '#a0a0a0'}
                strokeWidth={2}
              />
            );
          })}
        </svg>
        <div className="flex pl-[6px] pt-[1px] text-[36px] leading-[36px] text-[#666]">
          <span className="w-[262px]">201808</span>
          <span className="w-[361px]">202011</span>
          <span className="w-[296px]">202305</span>
          <span>202511</span>
        </div>
      </div>

      {/* promo pill */}
      <div className="mt-[18px] mx-[18px] w-[1043px] h-[90px] rounded-full bg-[#fdeee5] flex items-center pl-[30px]">
        <svg width={45} height={39} viewBox="0 0 45 39">
          <rect x={0} y={13} width={3} height={13} fill="#e8590c" />
          <path d="M7 12 L28 10 L45 0 V39 L34 33 L30 36 L26 30 L7 28 Z" fill="#e8590c" />
        </svg>
        <span className="ml-[55px] w-[827px] text-[39.5px] leading-none text-[#dc5a14] whitespace-nowrap">正规融资平台，安全有保障，点我查看&gt;&gt;</span>
        <i className="h-[36px] w-[1.5px] bg-[#c9a48f]" />
        <span className="ml-[17px]">
          <CloseX w={30} h={33} />
        </span>
      </div>

      {/* content tabs */}
      <div className="mt-[17px] h-[105px] border-y-2 border-[#e2e2e2] flex items-center gap-[58px] pt-[6px] pl-[57px] text-[45px] leading-none text-[#666]">
        <span className="relative text-[#dc5a14]">
          成份股
          <i className="absolute left-[37px] top-[56px] h-[6px] w-[60px] rounded-full bg-[#e05a0a]" />
        </span>
        <span>资金</span>
        <span>关联基金</span>
        <span>必读</span>
        <span>股吧</span>
        <span>资讯</span>
      </div>

      <div className="h-[33px]" />

      {/* bottom toolbar */}
      <div className="h-[136px] border-t-2 border-[#e2e2e2] bg-[#f7f8fa] flex text-[#666]">
        <div className="w-[275px] pl-[42px] pt-[10px] flex flex-col">
          <svg className="ml-[86px]" width={20} height={12} viewBox="0 0 20 12">
            <path d="M10 1 L20 12 H0 Z" fill="#8a8a8a" />
          </svg>
          <span className="ml-[26px] mt-[9px] text-[39px] leading-none text-[#d2363f]">4029.50</span>
          <div className="mt-[9px] flex items-center leading-none">
            <span className="w-[120px] text-[36px] text-[#666]">上证</span>
            <span className="text-[38px] tracking-[0.4px] text-[#d2363f]">0.73%</span>
          </div>
        </div>
        <div className="w-[201px] flex flex-col items-center -ml-[1px]">
          <svg width={80} height={80} viewBox="15 0 240 240">
            <path d="M65 45 L72 30 H205 Q235 30 235 60 L225 170 Q222 190 203 190" fill="none" stroke="#666" strokeWidth={9} />
            <path d="M35 158 L48 65 H190 Q200 65 198 85 L185 190 Q183 205 170 205 H60 L122 148 L150 165 L155 105 Q155 92 145 92 L70 105 L92 128 Z" fill="none" stroke="#666" strokeWidth={9} strokeLinejoin="round" />
          </svg>
          <span className="mt-[7px] text-[36px] leading-none">买板块</span>
        </div>
        <div className="w-[201px] flex flex-col items-center">
          <svg width={80} height={80} viewBox="620 0 240 240">
            <path d="M775 37 H690 Q665 37 665 65 V165 Q665 190 690 190 H795 Q820 190 820 165 V80" fill="none" stroke="#666" strokeWidth={9} />
            <path d="M715 138 L800 48 Q812 33 820 42 Q824 50 812 60 L728 130 Z" fill="#666" />
          </svg>
          <span className="mt-[7px] text-[36px] leading-none">发帖</span>
        </div>
        <div className="w-[201px] flex flex-col items-center">
          <svg width={80} height={80} viewBox="1225 0 240 240">
            <g fill="none" stroke="#666" strokeWidth={9}>
              <rect x={1270} y={40} width={65} height={65} rx={10} />
              <rect x={1270} y={122} width={65} height={65} rx={10} />
              <rect x={1352} y={122} width={65} height={65} rx={10} />
              <path d="M1385 38 L1420 72 L1385 107 L1350 72 Z" strokeLinejoin="round" />
            </g>
          </svg>
          <span className="mt-[7px] text-[36px] leading-none">功能</span>
        </div>
        <div className="w-[201px] flex flex-col items-center">
          <svg width={80} height={80} viewBox="0 0 80 80">
            <circle cx={40} cy={38} r={26.5} fill="none" stroke="#666" strokeWidth={3} />
            <circle cx={31} cy={38} r={2.4} fill="#666" />
            <circle cx={40} cy={38} r={2.4} fill="#666" />
            <circle cx={49} cy={38} r={2.4} fill="#666" />
          </svg>
          <span className="mt-[7px] text-[36px] leading-none">设自选</span>
        </div>
      </div>

      {/* system nav */}
      <div className="h-[114px] bg-black flex items-center pl-[287px]">
        <svg width={43} height={50} viewBox="0 0 43 50">
          <path d="M41 2 L2 25 L41 48 Z" fill="none" stroke="#aaa" strokeWidth={4} strokeLinejoin="round" />
        </svg>
        <svg className="ml-[186px]" width={50} height={50} viewBox="0 0 50 50">
          <circle cx={25} cy={25} r={23} fill="none" stroke="#aaa" strokeWidth={4} />
        </svg>
        <svg className="ml-[183px]" width={44} height={46} viewBox="0 0 44 46">
          <rect x={2} y={2} width={40} height={42} rx={3} fill="none" stroke="#aaa" strokeWidth={4} />
        </svg>
      </div>
    </div>
  );
}
